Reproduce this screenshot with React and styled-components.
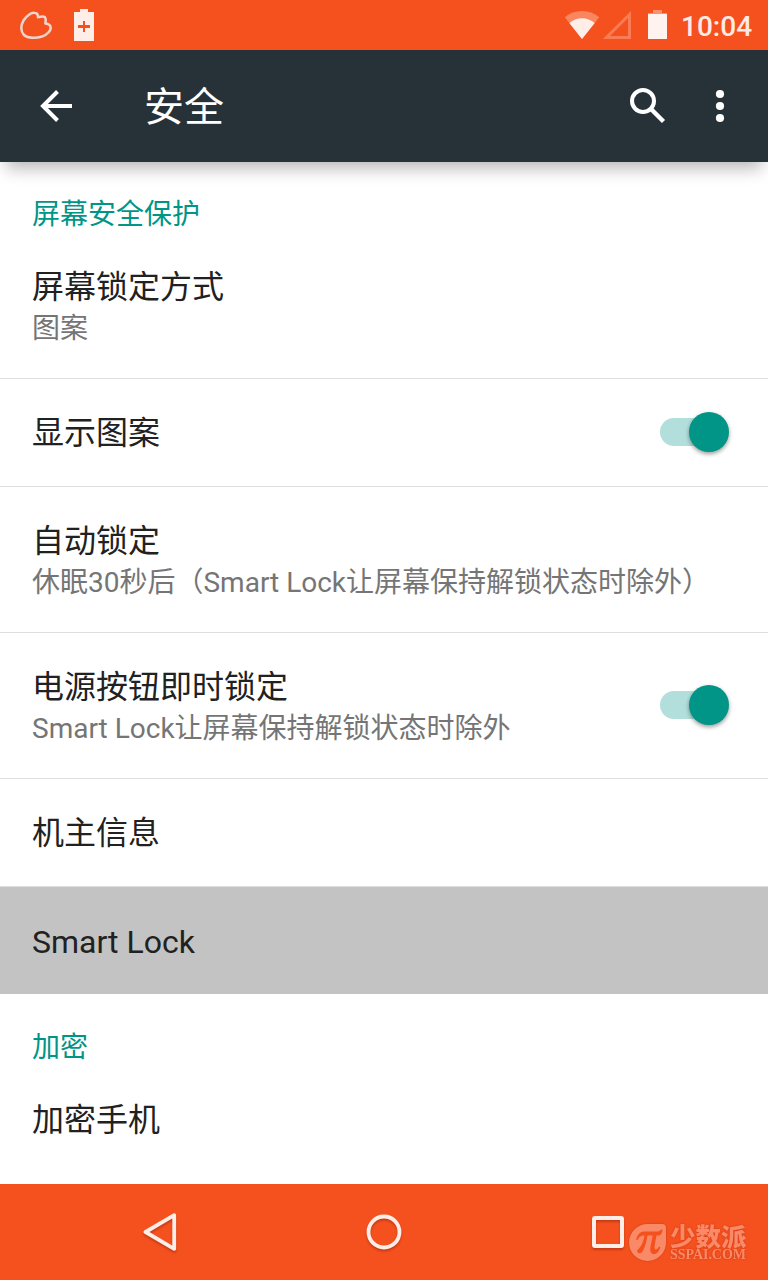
import React from "react";
import styled, { createGlobalStyle } from "styled-components";

const ORANGE = "#f5511e";
const TEAL = "#009587";

const GlobalStyle = createGlobalStyle`
  * { box-sizing: border-box; }
  body {
    margin: 0;
    background: #fff;
    font-family: Roboto, "Noto Sans CJK SC", sans-serif;
  }
`;

const Screen = styled.div`
  width: 768px;
  height: 1280px;
  display: flex;
  flex-direction: column;
  overflow: hidden;
  background: #fff;
`;

const StatusBar = styled.header`
  height: 50px;
  flex: none;
  display: flex;
  justify-content: space-between;
  background: ${ORANGE};
`;

const StatusGroup = styled.div`
  display: flex;
  align-items: center;
`;

const Clock = styled.span`
  width: 86px;
  padding-top: 2px;
  font-size: 28px;
  font-weight: 500;
  line-height: 50px;
  height: 50px;
  text-indent: -1px;
  color: #ffeae5;
`;

const Toolbar = styled.div`
  height: 112px;
  flex: none;
  display: flex;
  align-items: center;
  position: relative;
  background: #273238;
  box-shadow: 0 12px 16px -6px rgba(0, 0, 0, 0.29);
`;

const Title = styled.h1`
  flex: 1;
  margin: 0;
  padding: 4px 0 0 32px;
  font-size: 40px;
  font-weight: 400;
  line-height: 56px;
  color: #fff;
`;

const Icon = styled.svg`
  display: block;
  flex: none;
`;

const List = styled.main`
  flex: 1;
  overflow: hidden;
`;

const SectionHeader = styled.h2`
  height: ${(p) => p.$height}px;
  margin: 0;
  padding: ${(p) => p.$height - 38}px 32px 0;
  font-size: 28px;
  font-weight: 400;
  line-height: 40px;
  color: ${TEAL};
`;

const Row = styled.div`
  height: ${(p) => (p.$tall ? 146 : 108) - (p.$pressed ? 1 : 0)}px;
  padding: ${(p) => (p.$pressed ? 3 : 0)}px 36px 0 32px;
  display: flex;
  align-items: center;
  justify-content: space-between;
  background: ${(p) => (p.$pressed ? "#c3c3c3" : "#fff")};
  border-bottom: ${(p) => (p.$divider ? "1px solid #dedede" : "none")};
`;

const RowTitle = styled.div`
  font-size: 32px;
  line-height: 44px;
  height: 44px;
  color: #212121;
`;

const RowSummary = styled.div`
  font-size: 28px;
  line-height: 40px;
  height: 38px;
  white-space: nowrap;
  color: #757575;
`;

const SwitchTrack = styled.div`
  width: 69px;
  height: 28px;
  margin: 0 3px 2px 0;
  display: flex;
  align-items: center;
  justify-content: flex-end;
  border-radius: 14px;
  background: linear-gradient(#b2dfdb, #b2dfdb) left / 50px 28px no-repeat;
`;

const SwitchThumb = styled.div`
  width: 40px;
  height: 40px;
  flex: none;
  border-radius: 50%;
  background: ${TEAL};
  box-shadow: 0 2px 4px rgba(0, 0, 0, 0.4);
`;

const NavBar = styled.nav`
  height: 96px;
  flex: none;
  position: relative;
  display: flex;
  align-items: center;
  justify-content: center;
  background: ${ORANGE};
`;

const NavButton = styled.div`
  width: 224px;
  display: flex;
  justify-content: center;
  filter: drop-shadow(0 2px 1px rgba(80, 0, 0, 0.28));
`;

const Watermark = styled.div`
  position: absolute;
  left: 628px;
  top: 38px;
  display: flex;
  gap: 3px;
  color: #fa8a67;
  filter: drop-shadow(0 0 1px rgba(140, 20, 0, 0.35));
`;

const WatermarkText = styled.div`
  display: flex;
  flex-direction: column;
`;

const WatermarkName = styled.span`
  height: 25px;
  font-family: "Noto Sans CJK SC", sans-serif;
  font-size: 25.5px;
  font-weight: 900;
  line-height: 25px;
`;

const WatermarkSite = styled.span`
  height: 15px;
  font-family: "Liberation Serif", serif;
  font-size: 14px;
  font-weight: 700;
  line-height: 16px;
  letter-spacing: -0.05px;
`;

function Switch() {
  return (
    <SwitchTrack>
      <SwitchThumb />
    </SwitchTrack>
  );
}

function Preference({ title, summary, toggle, pressed, divider = true }) {
  return (
    <Row $tall={Boolean(summary)} $pressed={pressed} $divider={divider}>
      <div>
        <RowTitle>{title}</RowTitle>
        {summary && <RowSummary>{summary}</RowSummary>}
      </div>
      {toggle && <Switch />}
    </Row>
  );
}

export default function App() {
  return (
    <>
      <GlobalStyle />
      <Screen>
        <StatusBar>
          <StatusGroup>
            <Icon width="110" height="50" viewBox="0 0 110 50">
              <path
                d="M34.500 12.800C31 12.300 26 16.300 23.500 20.500C20.500 25.500 20.500 31.500 24 35C28 38.500 36 38.500 42 36.500C48 34.500 51.500 30 50.500 26.500C49.800 24.200 48 24 45.300 23.500C45.700 20.500 46.300 18.800 45 17.200C43.500 16 41.500 16.500 38 17.200C38 14.500 37 13 34.500 12.800Z"
                fill="none" stroke="#ecd3cb" strokeWidth="2.5" strokeLinejoin="round"
              />
              <path fillRule="evenodd" fill="#ffede8" d="M80 9H88V12H94V41H74V12H80ZM83 21V25H78V28H83V32H85V28H90V25H85V21Z" />
            </Icon>
          </StatusGroup>
          <StatusGroup>
            <Icon width="118" height="50" viewBox="564 0 118 50">
              <path d="M582 39L564.800 17.300C574.500 9 589.500 9 599.200 17.300Z" fill="#fa8660" />
              <path d="M582 39L569.300 23C576.500 16.600 587.500 16.600 594.700 23Z" fill="#ffede8" />
              <path d="M606.500 37.500H629.500V14.500Z" fill="none" stroke="#f97c54" strokeWidth="3" />
              <path d="M653 10H662V13H667V15H648V13H653Z" fill="#fa9270" />
              <path d="M648 14H667V39H648Z" fill="#fff3ef" />
            </Icon>
            <Clock>10:04</Clock>
          </StatusGroup>
        </StatusBar>

        <Toolbar>
          <Icon width="112" height="112" viewBox="0 50 112 112">
            <path d="M72 106H43M57.500 91.500L43 106L57.500 120.500" fill="none" stroke="#fff" strokeWidth="4" />
          </Icon>
          <Title>安全</Title>
          <Icon width="168" height="112" viewBox="600 50 168 112">
            <circle cx="643" cy="101" r="11" fill="none" stroke="#fff" strokeWidth="4" />
            <path d="M651.500 109.500L663.500 121.500" stroke="#fff" strokeWidth="4.400" />
            <circle cx="720" cy="94" r="4.100" fill="#fff" />
            <circle cx="720" cy="106" r="4.100" fill="#fff" />
            <circle cx="720" cy="118" r="4.100" fill="#fff" />
          </Icon>
        </Toolbar>

        <List>
          <SectionHeader $height={71}>屏幕安全保护</SectionHeader>
          <Preference title="屏幕锁定方式" summary="图案" />
          <Preference title="显示图案" toggle />
          <Preference title="自动锁定" summary="休眠30秒后（Smart Lock让屏幕保持解锁状态时除外）" />
          <Preference title="电源按钮即时锁定" summary="Smart Lock让屏幕保持解锁状态时除外" toggle />
          <Preference title="机主信息" />
          <Preference title="Smart Lock" pressed divider={false} />
          <SectionHeader $height={72}>加密</SectionHeader>
          <Preference title="加密手机" divider={false} />
        </List>

        <NavBar>
          <NavButton>
            <Icon width="36" height="40" viewBox="142 1212 36 40">
              <path d="M174.200 1215.200V1248.800L145.500 1232Z" fill="none" stroke="#ffede8" strokeWidth="3.800" strokeLinejoin="round" />
            </Icon>
          </NavButton>
          <NavButton>
            <Icon width="40" height="40" viewBox="364 1212 40 40">
              <circle cx="384" cy="1232" r="15.500" fill="none" stroke="#ffede8" strokeWidth="3.800" />
            </Icon>
          </NavButton>
          <NavButton>
            <Icon width="40" height="40" viewBox="588 1212 40 40">
              <rect x="594" y="1218" width="28" height="28" rx="1" fill="none" stroke="#ffede8" strokeWidth="4" />
            </Icon>
          </NavButton>
          <Watermark>
            <Icon width="39" height="40" viewBox="628 1222 39 40">
              <path d="M648 1224H662Q666 1224 666 1228V1242A18.500 18.500 0 1 1 648 1224Z" fill="#fa8a67" />
              <path
                d="M636 1240C637.500 1235 639.500 1231.500 644 1231.500H656C659 1231.500 660 1231 661 1229.500H662.500C662 1233.500 661 1235.500 658 1235.500H656.500C655.500 1241 654.300 1246 654.700 1248.500C655.200 1250.500 657.500 1249.500 659 1246.500L660.300 1247C659 1252 656.500 1254 654 1254C651 1254 649.800 1251.500 650.300 1248C650.800 1244 652 1240 652.700 1235.500H647.500C646.500 1241 645 1248 642.500 1251.500C640.500 1254.500 636.500 1253.500 637.300 1250.500C638 1248.500 640 1248 641.500 1245C643 1242 644 1238.500 644.500 1235.500C641 1235.500 639.500 1236.500 637.500 1240Z"
                fill={ORANGE}
              />
            </Icon>
            <WatermarkText>
              <WatermarkName>少数派</WatermarkName>
              <WatermarkSite>SSPAI.COM</WatermarkSite>
            </WatermarkText>
          </Watermark>
        </NavBar>
      </Screen>
    </>
  );
}
